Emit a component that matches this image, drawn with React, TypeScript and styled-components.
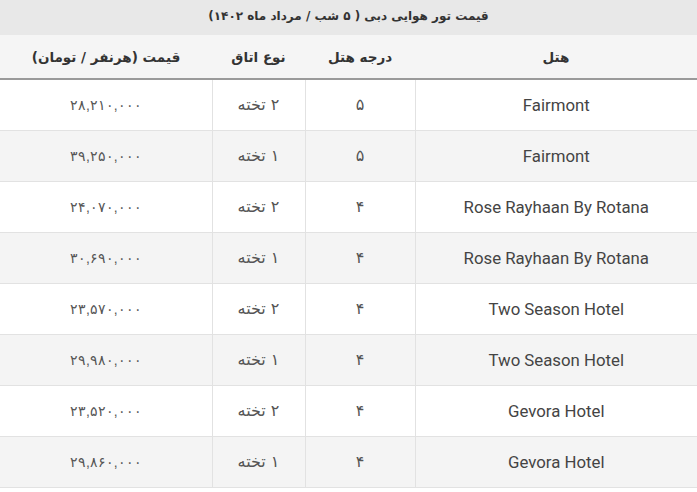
import React from 'react';
import styled, { createGlobalStyle } from 'styled-components';

const GlobalStyle = createGlobalStyle`
  body {
    margin: 0;
    background: #fff;
    font-family: Roboto, "DejaVu Sans", sans-serif;
  }
`;

const Table = styled.table`
  width: 697px;
  border-collapse: collapse;
  direction: rtl;
  table-layout: fixed;
  color: #444;
`;

const Title = styled.caption`
  height: 35px;
  background: #e8e8e8;
  font-family: "DejaVu Sans", sans-serif;
  font-weight: bold;
  font-size: 12px;
  color: #333;
  line-height: 33px;
  text-align: center;
`;

const HeadCell = styled.th<{ $w: number }>`
  width: ${(p) => p.$w}px;
  height: 43px;
  background: #f5f5f5;
  border-bottom: 2px solid #9a9a9a;
  font-family: "DejaVu Sans", sans-serif;
  font-weight: bold;
  font-size: 13.5px;
  color: #333;
  text-align: center;
  padding: 0;
`;

const Row = styled.tr<{ $odd: boolean }>`
  height: 51px;
  background: ${(p) => (p.$odd ? '#f4f4f4' : '#fff')};
`;

const Cell = styled.td<{ $kind?: 'hotel' | 'price' | 'fa' }>`
  border-top: 1px solid #e2e2e2;
  border-bottom: 1px solid #e2e2e2;
  border-left: 1px solid #e2e2e2;
  text-align: center;
  padding: 0;
  font-family: ${(p) =>
    p.$kind === 'hotel'
      ? 'Roboto, sans-serif'
      : p.$kind === 'price'
      ? '"Liberation Sans", "DejaVu Sans", sans-serif'
      : '"DejaVu Sans", sans-serif'};
  font-size: ${(p) => (p.$kind === 'hotel' ? '16.8px' : p.$kind === 'price' ? '13.8px' : '16px')};
  color: ${(p) => (p.$kind === 'hotel' ? '#444' : '#555')};
  font-weight: ${(p) => (p.$kind === 'price' ? 300 : 400)};
  &:last-child {
    border-left: none;
  }
`;

const Num = styled.span`
  direction: ltr;
  unicode-bidi: isolate;
`;

const rows = [
  ['Fairmont', '۵', '۲ تخته', '۲۸,۲۱۰,۰۰۰'],
  ['Fairmont', '۵', '۱ تخته', '۳۹,۲۵۰,۰۰۰'],
  ['Rose Rayhaan By Rotana', '۴', '۲ تخته', '۲۴,۰۷۰,۰۰۰'],
  ['Rose Rayhaan By Rotana', '۴', '۱ تخته', '۳۰,۶۹۰,۰۰۰'],
  ['Two Season Hotel', '۴', '۲ تخته', '۲۳,۵۷۰,۰۰۰'],
  ['Two Season Hotel', '۴', '۱ تخته', '۲۹,۹۸۰,۰۰۰'],
  ['Gevora Hotel', '۴', '۲ تخته', '۲۳,۵۲۰,۰۰۰'],
  ['Gevora Hotel', '۴', '۱ تخته', '۲۹,۸۶۰,۰۰۰'],
];

export default function App() {
  return (
    <>
      <GlobalStyle />
      <Table>
        <Title>قیمت تور هوایی دبی ( ۵ شب / مرداد ماه ۱۴۰۲)</Title>
        <thead>
          <tr>
            <HeadCell $w={282}>هتل</HeadCell>
            <HeadCell $w={110}>درجه هتل</HeadCell>
            <HeadCell $w={93}>نوع اتاق</HeadCell>
            <HeadCell $w={212}>قیمت (هرنفر / تومان)</HeadCell>
          </tr>
        </thead>
        <tbody>
          {rows.map((r, i) => (
            <Row key={i} $odd={i % 2 === 1}>
              <Cell $kind="hotel">{r[0]}</Cell>
              <Cell $kind="fa">{r[1]}</Cell>
              <Cell $kind="fa">{r[2]}</Cell>
              <Cell $kind="price">
                <Num>{r[3]}</Num>
              </Cell>
            </Row>
          ))}
        </tbody>
      </Table>
    </>
  );
}
